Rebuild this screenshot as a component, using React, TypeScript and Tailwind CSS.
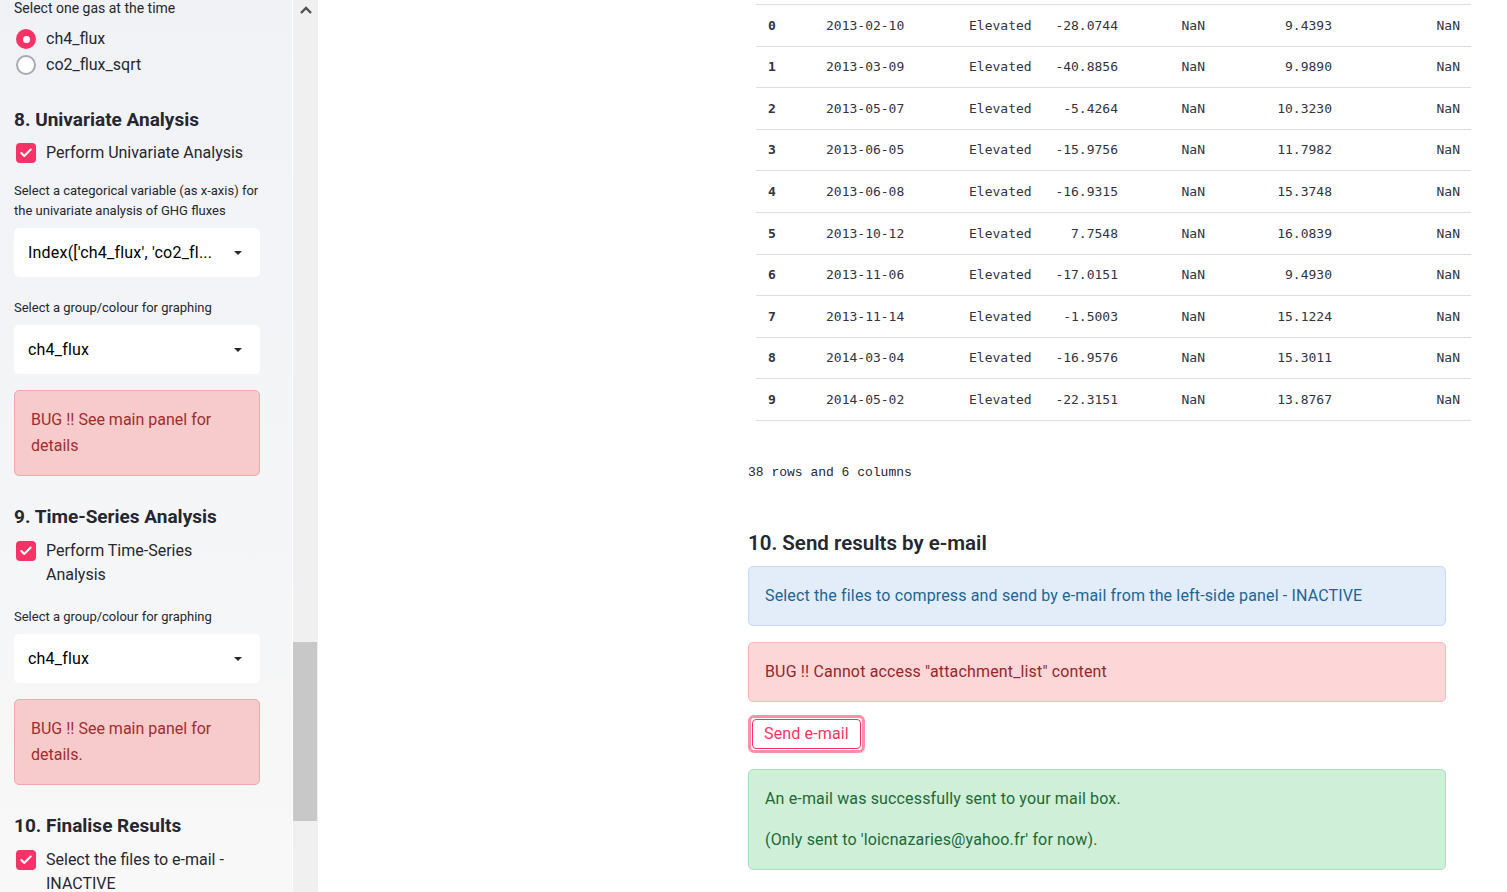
import { Check } from 'lucide-react'

const rows = [
    ['0', '2013-02-10', 'Elevated', '-28.0744', 'NaN', '9.4393', 'NaN'],
    ['1', '2013-03-09', 'Elevated', '-40.8856', 'NaN', '9.9890', 'NaN'],
    ['2', '2013-05-07', 'Elevated', '-5.4264', 'NaN', '10.3230', 'NaN'],
    ['3', '2013-06-05', 'Elevated', '-15.9756', 'NaN', '11.7982', 'NaN'],
    ['4', '2013-06-08', 'Elevated', '-16.9315', 'NaN', '15.3748', 'NaN'],
    ['5', '2013-10-12', 'Elevated', '7.7548', 'NaN', '16.0839', 'NaN'],
    ['6', '2013-11-06', 'Elevated', '-17.0151', 'NaN', '9.4930', 'NaN'],
    ['7', '2013-11-14', 'Elevated', '-1.5003', 'NaN', '15.1224', 'NaN'],
    ['8', '2014-03-04', 'Elevated', '-16.9576', 'NaN', '15.3011', 'NaN'],
    ['9', '2014-05-02', 'Elevated', '-22.3151', 'NaN', '13.8767', 'NaN'],
]

function Caret() {
    return (
        <svg width="10" height="6" viewBox="0 0 10 6" className="shrink-0">
            <path d="M1 1h8L5 5z" fill="#262730" />
        </svg>
    )
}

function CheckBox(props: { children: React.ReactNode; className?: string }) {
    return (
        <div className={'flex items-start ' + (props.className || '')}>
            <div className="mt-[2px] ml-[2px] w-[20px] h-[20px] rounded-[4px] bg-[#f63366] flex items-center justify-center shrink-0">
                <Check size={14} strokeWidth={3.5} color="white" />
            </div>
            <div className="ml-[10px] text-[16px] leading-[24px]">{props.children}</div>
        </div>
    )
}

function SelectBox(props: { value: string; className?: string }) {
    return (
        <div className={'h-[49px] bg-white rounded-[5px] flex items-center pl-[14px] pr-[17px] text-[16px] tracking-[0.2px] text-black ' + (props.className || '')}>
            <div className="flex-1 truncate">{props.value}</div>
            <Caret />
        </div>
    )
}

function SideError(props: { children: React.ReactNode; className?: string }) {
    return (
        <div className={'rounded-[5px] border border-[#f3a7a8] bg-[#f7cbcc] px-[16px] py-[16px] text-[16px] leading-[26px] text-[#a12d30] ' + (props.className || '')}>
            {props.children}
        </div>
    )
}

function Sidebar() {
    return (
        <aside className="w-[292px] shrink-0 h-full bg-linear-to-b from-[#f0f2f6] to-[#f8f8f8] pt-[1px] pl-[14px] pr-[32px] text-[#262730]">
            <div className="-mt-[1px] text-[14px] leading-[16px]">Select one gas at the time</div>
            <div className="mt-[10px] flex items-center h-[26px]">
                <div className="ml-[2px] w-[20px] h-[20px] rounded-full bg-[#f63366] flex items-center justify-center">
                    <div className="w-[7px] h-[7px] rounded-full bg-white" />
                </div>
                <span className="ml-[10px] text-[16px]">ch4_flux</span>
            </div>
            <div className="flex items-center h-[26px]">
                <div className="ml-[2px] w-[20px] h-[20px] rounded-full bg-white border-2 border-[#a5a9b4]" />
                <span className="ml-[10px] text-[16px]">co2_flux_sqrt</span>
            </div>

            <h2 className="mt-[30px] text-[19px] leading-[24px] font-bold">8. Univariate Analysis</h2>
            <CheckBox className="mt-[9px]">Perform Univariate Analysis</CheckBox>
            <div className="mt-[16px] text-[13px] leading-[20px]">
                Select a categorical variable (as x-axis) for<br />the univariate analysis of GHG fluxes
            </div>
            <SelectBox className="mt-[7px]" value="Index(['ch4_flux', 'co2_fl..." />
            <div className="mt-[21px] text-[13px] leading-[20px]">Select a group/colour for graphing</div>
            <SelectBox className="mt-[7px]" value="ch4_flux" />
            <SideError className="mt-[16px]">BUG !! See main panel for<br />details</SideError>

            <h2 className="mt-[29px] text-[19px] leading-[24px] font-bold">9. Time-Series Analysis</h2>
            <CheckBox className="mt-[10px]">Perform Time-Series<br />Analysis</CheckBox>
            <div className="mt-[20px] text-[13px] leading-[20px]">Select a group/colour for graphing</div>
            <SelectBox className="mt-[7px]" value="ch4_flux" />
            <SideError className="mt-[16px]">BUG !! See main panel for<br />details.</SideError>

            <h2 className="mt-[29px] text-[19px] leading-[24px] font-bold">10. Finalise Results</h2>
            <CheckBox className="mt-[10px]">Select the files to e-mail -<br />INACTIVE</CheckBox>
        </aside>
    )
}

function Scrollbar() {
    return (
        <div className="w-[25px] shrink-0 h-full bg-[#f0f0f0] flex flex-col">
            <div className="h-[20px] flex items-center justify-center">
                <svg width="12" height="8" viewBox="0 0 12 8">
                    <path d="M1 7L6 2l5 5" fill="none" stroke="#505050" strokeWidth="2.4" />
                </svg>
            </div>
            <div className="mt-[622px] h-[179px] w-[24px] bg-[#c8c8c8]" />
        </div>
    )
}

export default function App() {
    return (
        <div className="h-[892px] w-full flex overflow-hidden bg-white font-['Roboto',sans-serif]">
            <Sidebar />
            <div className="w-px bg-white shrink-0" />
            <Scrollbar />
            <main className="flex-1 text-[#262730]">
                <div className="ml-[430px] w-[698px] pt-[4px]">
                    <div className="ml-[8px] w-[715px] border-t border-[#dcdee4] font-['DejaVu_Sans_Mono',monospace] text-[13px] text-[#31333f]">
                        {rows.map((r) => (
                            <div key={r[0]} className="grid grid-cols-[58px_143px_85px_88px_87px_127px_127px] h-[41.6px] items-center border-b border-[#dcdee4]">
                                <div className="pl-[12px] font-bold">{r[0]}</div>
                                <div className="pl-[12px]">{r[1]}</div>
                                <div className="pl-[12px]">{r[2]}</div>
                                <div className="pr-[12px] text-right">{r[3]}</div>
                                <div className="pr-[12px] text-right">{r[4]}</div>
                                <div className="pr-[12px] text-right">{r[5]}</div>
                                <div className="pr-[11px] text-right">{r[6]}</div>
                            </div>
                        ))}
                    </div>

                    <div className="mt-[44px] font-['Liberation_Mono',monospace] text-[13px] leading-[16px] text-[#262730]">38 rows and 6 columns</div>

                    <h2 className="mt-[48px] text-[20.5px] leading-[28px] font-semibold">10. Send results by e-mail</h2>

                    <div className="mt-[9px] rounded-[5px] border border-[#c6dcf4] bg-[#e2edf9] px-[16px] py-[17px] text-[16px] leading-[24px] tracking-[0.15px] text-[#1d6594]">
                        Select the files to compress and send by e-mail from the left-side panel - INACTIVE
                    </div>

                    <div className="mt-[16px] rounded-[5px] border border-[#fbb4b5] bg-[#fdd6d7] px-[16px] py-[17px] text-[16px] leading-[24px] tracking-[0.15px] text-[#94272a]">
                        BUG !! Cannot access "attachment_list" content
                    </div>

                    <button className="mt-[13px] h-[38px] rounded-[6px] border-[3px] border-[#ff8fa8] bg-white px-[1px] py-[1px]">
                        <span className="flex h-full items-center rounded-[4px] border border-[#f63366] px-[11px] text-[16px] tracking-[0.15px] text-[#f63366]">Send e-mail</span>
                    </button>

                    <div className="mt-[16px] rounded-[5px] border border-[#a9e0ba] bg-[#cfefd8] px-[16px] py-[17px] text-[16px] leading-[24px] tracking-[0.15px] text-[#1b6a36]">
                        <p>An e-mail was successfully sent to your mail box.</p>
                        <p className="mt-[17px]">(Only sent to 'loicnazaries@yahoo.fr' for now).</p>
                    </div>
                </div>
            </main>
        </div>
    )
}
